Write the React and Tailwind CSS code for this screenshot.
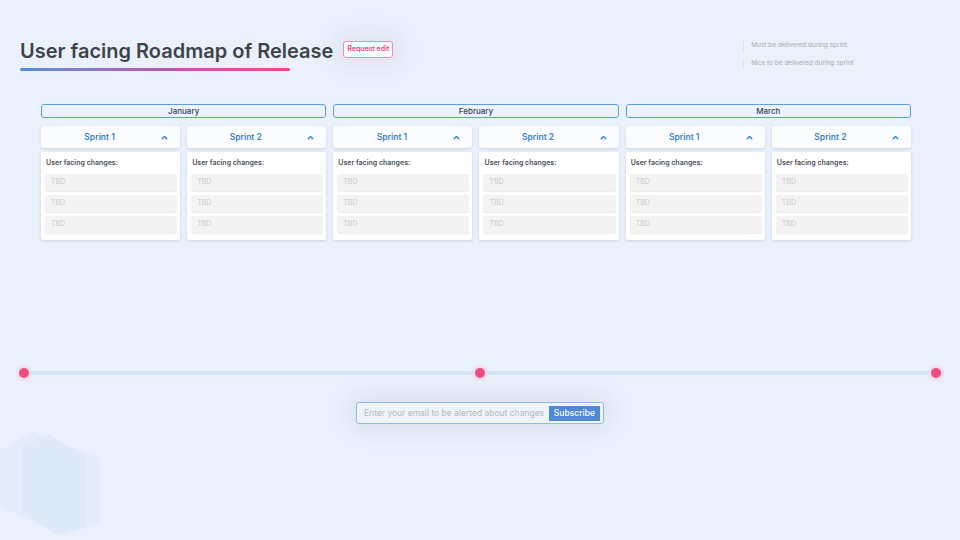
import React from "react";

const months = ["January", "February", "March"];

function Chevron() {
  return (
    <svg width="7" height="5" viewBox="0 0 7 5" className="block">
      <path d="M1.2 3.8 L3.5 1.5 L5.8 3.8" fill="none" stroke="#3b7fd6" strokeWidth="1.4" strokeLinecap="round" strokeLinejoin="round" />
    </svg>
  );
}

function Sprint({ n }) {
  return (
    <div className="flex flex-col gap-[4px]">
      <div className="h-[22px] bg-[#fbfcfe] rounded-[3px] shadow-[0_1px_3px_rgba(60,80,110,0.18)] flex items-center pl-[24px] pr-[12px]">
        <div className="flex-1 text-center text-[8.5px] font-semibold text-[#3b7fd6]">Sprint {n}</div>
        <div className="w-[34px] flex justify-end"><Chevron /></div>
      </div>
      <div className="h-[88px] bg-white rounded-[2px] shadow-[0_1px_3px_rgba(60,80,110,0.18)] pl-[4px] pr-[3px] pt-[6px]">
        <div className="text-[7px] font-semibold text-[#4b5058] pl-[1px] leading-[10px]">User facing changes:</div>
        <div className="mt-[6px] flex flex-col gap-[4px]">
          {[0, 1, 2].map((i) => (
            <div key={i} className="h-[17px] bg-[#f3f3f4] rounded-[2px] shadow-[0_1px_1px_rgba(0,0,0,0.08)] flex items-center pl-[6px] text-[7px] text-[#c8cacd]">TBD</div>
          ))}
        </div>
      </div>
    </div>
  );
}

export default function App() {
  return (
    <div className="w-[960px] h-[540px] bg-[#eaf1fc] relative overflow-hidden" style={{ fontFamily: "Inter, 'Noto Sans', sans-serif" }}>
      {/* decorative hexagon */}
      <svg className="absolute left-0 top-[428px]" width="110" height="110" viewBox="0 0 110 110">
        <polygon points="0,22 32,4 100,30 100,94 62,108 0,78" fill="#dce8f9" opacity="0.45" />
        <polygon points="22,18 50,6 86,30 86,100 55,106 22,84" fill="#d6e4f8" opacity="0.45" />
      </svg>

      {/* header */}
      <div className="flex items-start pt-[38px] pl-[20px] pr-[20px] h-[104px]">
        <div className="flex flex-col">
          <div className="text-[20px] font-semibold text-[#3d4449] leading-[26px]">User facing Roadmap of Release</div>
          <div className="mt-[4px] h-[3px] w-[270px] rounded-full bg-gradient-to-r from-[#4a8fe0] via-[#b45bb5] to-[#f2457f]"></div>
        </div>
        <div className="ml-[10px] mt-[3px] h-[17px] px-[3px] flex items-center rounded-[3px] border border-[#f28db0] bg-[#f8f9fd] text-[7px] font-medium text-[#e8336f] shadow-[0_0_24px_8px_rgba(120,130,150,0.12)]">Request edit</div>
        <div className="ml-[350px] mt-[3px] flex flex-col gap-[8px]">
          <div className="flex items-center gap-[7px]">
            <div className="w-[1px] h-[10px] bg-[#e4ddd2]"></div>
            <div className="text-[6.5px] text-[#a6abb3]">Must be delivered during sprint</div>
          </div>
          <div className="flex items-center gap-[7px]">
            <div className="w-[1px] h-[10px] border-l border-dashed border-[#e4ddd2]"></div>
            <div className="text-[6.5px] text-[#a6abb3]">Nice to be delivered during sprint</div>
          </div>
        </div>
      </div>

      {/* months */}
      <div className="grid grid-cols-3 gap-[7px] pl-[41px] pr-[49px]">
        {months.map((m) => (
          <div key={m} className="flex flex-col">
            <div className="h-[14px] rounded-[3px] border border-[#5e9ce6] bg-[#ecf3fd] flex items-center justify-center text-[8px] font-medium text-[#3a3f45]">{m}</div>
            <div className="mt-[8px] grid grid-cols-2 gap-[7px]">
              <Sprint n={1} />
              <Sprint n={2} />
            </div>
          </div>
        ))}
      </div>

      {/* timeline */}
      <div className="mt-[128px] px-[19px] flex items-center">
        <div className="w-[10px] h-[10px] rounded-full bg-[#ef4c80] shadow-[0_0_0_3px_rgba(235,220,230,0.8)] shrink-0"></div>
        <div className="flex-1 h-[4px] bg-[#d5e5f8]"></div>
        <div className="w-[10px] h-[10px] rounded-full bg-[#ef4c80] shadow-[0_0_0_3px_rgba(235,220,230,0.8)] shrink-0"></div>
        <div className="flex-1 h-[4px] bg-[#d5e5f8]"></div>
        <div className="w-[10px] h-[10px] rounded-full bg-[#ef4c80] shadow-[0_0_0_3px_rgba(235,220,230,0.8)] shrink-0"></div>
      </div>

      {/* subscribe */}
      <div className="mt-[24px] flex justify-center">
        <div className="w-[248px] h-[22px] rounded-[3px] border border-[#8fb7ea] bg-[#eef4fc] flex items-center pl-[7px] pr-[3px] shadow-[0_0_24px_6px_rgba(120,130,150,0.14)]">
          <div className="flex-1 text-[8.5px] text-[#b3b9c1] whitespace-nowrap">Enter your email to be alerted about changes</div>
          <div className="h-[15px] px-[5px] bg-[#4f89d6] text-white text-[8.5px] font-medium flex items-center">Subscribe</div>
        </div>
      </div>
    </div>
  );
}
